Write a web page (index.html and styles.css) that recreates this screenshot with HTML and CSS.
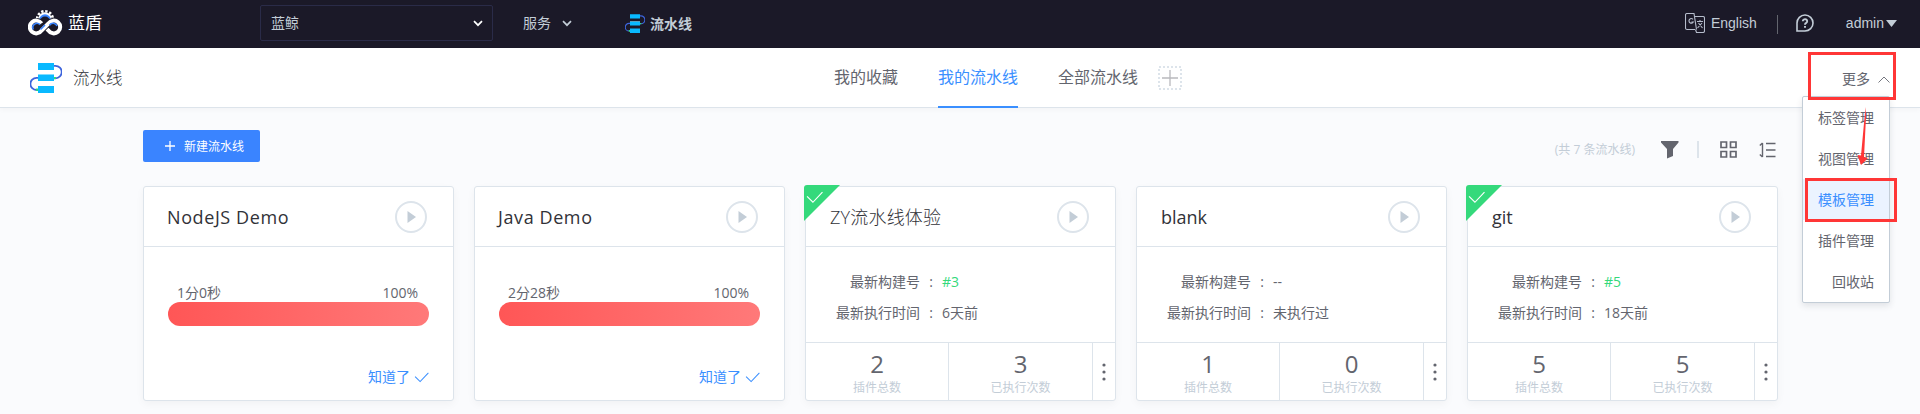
FILE: index.html
```html
<!DOCTYPE html>
<html lang="zh-CN">
<head>
<meta charset="utf-8">
<title>流水线</title>
<link rel="stylesheet" href="styles.css">
</head>
<body>
<svg width="0" height="0" class="defs">
  <symbol id="pipe" viewBox="0 0 32 30">
    <path d="M24 2.800h1.500a5.500 5.500 0 0 1 0 12.500H24M8 14.800H6.500a5.500 5.500 0 0 0 0 12.200H8" fill="none" stroke="#3d64dc" stroke-width="1.800"/>
    <path d="M8 0h16v7H8zM8 12h16v6H8zM8 23h16v7H8z" fill="#09b9ff"/>
    <path d="M8 11h16v1H8z" fill="#7fdcff"/>
    <path d="M24 14h2v2h-2zM6 25.500h2v2.500H6z" fill="#30d878"/>
  </symbol>
  <symbol id="down" viewBox="0 0 10 7"><path d="M1 1.200l4 4 4-4" fill="none" stroke="currentColor" stroke-width="1.700"/></symbol>
  <symbol id="check" viewBox="0 0 16 12"><path d="M1 5l5.500 5.500L15.500 1" fill="none" stroke="currentColor" stroke-width="1.100"/></symbol>
  <symbol id="play" viewBox="0 0 32 32"><circle cx="16" cy="16" r="15" fill="#fff" stroke="#dde4eb" stroke-width="2"/><path d="M12.500 10v12l8.500-6z" fill="#c3cdd7"/></symbol>
  <symbol id="more" viewBox="0 0 4 18"><circle cx="2" cy="2" r="1.600"/><circle cx="2" cy="9" r="1.600"/><circle cx="2" cy="16" r="1.600"/></symbol>
</svg>
<header class="topbar">
  <div class="brand">
    <svg width="35" height="29" viewBox="0 0 35 29">
      <circle cx="17" cy="11" r="7.800" fill="none" stroke="#fff" stroke-width="2.600" stroke-dasharray="2.400 1.680"/>
      <circle cx="17" cy="11" r="6.800" fill="#fff"/>
      <circle cx="17" cy="12" r="5.800" fill="#3a84ff"/>
      <circle cx="17" cy="13.500" r="5" fill="#1b1928"/>
      <circle cx="9" cy="19" r="9" fill="#1b1928"/><circle cx="25" cy="19" r="9" fill="#1b1928"/>
      <path d="M17 19l-3.500 3.600a6.400 6.400 0 1 1 0-7.200M17 19l3.500-3.600a6.400 6.400 0 1 1 0 7.200l-1.500-1.500" fill="none" stroke="#fff" stroke-width="4"/>
      <path d="M5.300 21.500a4.200 4.200 0 0 1 6.700-4.900M21.500 17.200a4.200 4.200 0 0 1 7.500.8M12.500 21.500L17 17" fill="none" stroke="#3a84ff" stroke-width="1.600"/>
    </svg>
    <span>蓝盾</span>
  </div>
  <div class="project"><span>蓝鲸</span><svg width="10" height="7"><use href="#down"/></svg></div>
  <div class="service"><span>服务</span><svg width="10" height="7"><use href="#down"/></svg></div>
  <div class="current"><svg width="20" height="19"><use href="#pipe"/></svg><b>流水线</b></div>
  <div class="user">
    <svg width="20" height="20" viewBox="0 0 20 20" fill="none" stroke="#b5bccb" stroke-width="1.100"><path d="M10 16.500H2A1.500 1.500 0 0 1 .5 15V2A1.500 1.500 0 0 1 2 .5h7l2.500 16M10 3.500h8A1.500 1.500 0 0 1 19.500 5v13a1.500 1.500 0 0 1-1.500 1.500h-6.500l-1-3M8 6.300A2.300 2.300 0 1 0 8.300 9H6.500M12 8.500h6M15 7v1.500M13.500 10l4 5M17 10l-4.500 5"/></svg>
    <span class="lang">English</span>
    <i class="bar"></i>
    <svg class="help" width="18" height="18" viewBox="0 0 18 18" fill="none" stroke="#c3cdd7"><path d="M1 17V9a8 8 0 1 1 8 8z" stroke-width="1.600"/><path d="M6.800 7.300a2.200 2 0 1 1 3.400 1.600Q9 9.500 9 10.800M9 12v1.800" stroke-width="1.900"/></svg>
    <span class="name">admin</span>
    <svg width="11" height="7"><path d="M0 0h11L5.500 7z" fill="#c3cdd7"/></svg>
  </div>
</header>
<nav class="nav">
  <div class="title"><svg width="32" height="30"><use href="#pipe"/></svg><span>流水线</span></div>
  <div class="tabs">
    <span class="tab">我的收藏</span><span class="tab active">我的流水线</span><span class="tab">全部流水线</span>
    <svg class="add" width="24" height="24"><rect x="1" y="1" width="22" height="22" fill="none" stroke="#dde4eb" stroke-width="2" stroke-dasharray="2 2"/><path d="M4 12h16M12 4v16" stroke="#b9b9bd" stroke-width="1.300"/></svg>
  </div>
  <div class="trigger">更多<svg width="12" height="7" viewBox="0 0 12 7"><path d="M.5 6.500L6 1l5.500 5.500" fill="none" stroke="#75777f"/></svg>
    <ul class="menu"><li>标签管理</li><li>视图管理</li><li class="on">模板管理</li><li>插件管理</li><li>回收站</li></ul>
    <svg class="marks" width="96" height="174" fill="none"><rect x="5.500" y="1.500" width="85" height="45" stroke="#ff3636" stroke-width="3"/><rect x="2.500" y="127.500" width="89" height="41" stroke="#ff3636" stroke-width="3"/><path d="M61.500 55l.5 10-2 40 4 1-7 7-3.500-10 3.500.5z" fill="#ff3636"/></svg>
  </div>
</nav>
<main class="main">
  <div class="tools">
    <button class="create"><svg width="10" height="10"><path d="M0 5h10M5 0v10" stroke="#fff" stroke-width="1.300"/></svg>新建流水线</button>
    <span class="count">(共 7 条流水线)</span>
    <svg class="filter" width="18" height="18"><path d="M0 0h17.500v1.500L12 8v7l-6 2.500V8L0 1.500z" fill="#63656e"/></svg>
    <i class="split"></i>
    <svg class="grid" width="17" height="17" fill="none" stroke="#63656e" stroke-width="1.700"><path d="M1 1h5.500v5.500H1zM10.500 1H16v5.500h-5.500zM1 10.500h5.500V16H1zM10.500 10.500H16V16h-5.500z"/></svg>
    <svg width="17" height="16" fill="none" stroke="#63656e" stroke-width="1.400"><path d="M3.500 1v14M.8 3.500L3.500 1M.8 12.500L3.500 15M7 1.500h9.500M7 8h9.500M7 14.500h9.500"/></svg>
  </div>
  <div class="cards">
    <section class="card">
      <header class="head"><h3 class="spaced">NodeJS Demo</h3><svg width="32" height="32"><use href="#play"/></svg></header>
      <div class="progress"><div class="info"><span>1分0秒</span><span>100%</span></div><div class="meter"></div><a class="ack">知道了<svg width="15" height="11"><use href="#check"/></svg></a></div>
    </section>
    <section class="card">
      <header class="head"><h3 class="spaced">Java Demo</h3><svg width="32" height="32"><use href="#play"/></svg></header>
      <div class="progress"><div class="info"><span>2分28秒</span><span>100%</span></div><div class="meter"></div><a class="ack">知道了<svg width="15" height="11"><use href="#check"/></svg></a></div>
    </section>
    <section class="card">
      <div class="ribbon"><svg width="17" height="13"><use href="#check"/></svg></div>
      <header class="head"><h3 class="light">ZY流水线体验</h3><svg width="32" height="32"><use href="#play"/></svg></header>
      <dl class="detail"><dt>最新构建号</dt><dd class="ok">#3</dd><dt>最新执行时间</dt><dd>6天前</dd></dl>
      <footer class="stats"><div><b>2</b><span>插件总数</span></div><div><b>3</b><span>已执行次数</span></div><svg width="22" height="18" fill="#63656e"><use href="#more"/></svg></footer>
    </section>
    <section class="card">
      <header class="head"><h3>blank</h3><svg width="32" height="32"><use href="#play"/></svg></header>
      <dl class="detail"><dt>最新构建号</dt><dd>--</dd><dt>最新执行时间</dt><dd>未执行过</dd></dl>
      <footer class="stats"><div><b>1</b><span>插件总数</span></div><div><b>0</b><span>已执行次数</span></div><svg width="22" height="18" fill="#63656e"><use href="#more"/></svg></footer>
    </section>
    <section class="card">
      <div class="ribbon"><svg width="17" height="13"><use href="#check"/></svg></div>
      <header class="head"><h3>git</h3><svg width="32" height="32"><use href="#play"/></svg></header>
      <dl class="detail"><dt>最新构建号</dt><dd class="ok">#5</dd><dt>最新执行时间</dt><dd>18天前</dd></dl>
      <footer class="stats"><div><b>5</b><span>插件总数</span></div><div><b>5</b><span>已执行次数</span></div><svg width="22" height="18" fill="#63656e"><use href="#more"/></svg></footer>
    </section>
  </div>
</main>
</body>
</html>
```

FILE: styles.css
```css
* { box-sizing: border-box; }
body {
  margin: 0;
  height: 414px;
  overflow: hidden;
  background: #fafbfd;
  color: #63656e;
  font: 14px/20px "Open Sans", "Noto Sans CJK SC", sans-serif;
  font-weight: 400;
  display: flex;
  flex-direction: column;
}
svg { display: block; flex: none; }
.defs { position: absolute; }
h3, dl, dd, ul { margin: 0; padding: 0; }

.topbar { height: 48px; flex: none; background: #1b1928; display: flex; align-items: center; color: #c3cdd7; font-weight: 400; }
.brand { width: 260px; padding: 0 0 3px 28px; display: flex; align-items: center; gap: 5px; color: #fff; font-size: 17px; }
.project { width: 233px; height: 36px; margin-top: -2px; border: 1px solid #2a2b48; border-radius: 2px; padding: 0 9px 0 10px; display: flex; align-items: center; justify-content: space-between; }
.project svg { color: #fff; }
.service { margin-left: 30px; display: flex; align-items: center; gap: 11px; margin-top: -2px; }
.current { margin-left: 53px; display: flex; align-items: center; gap: 5px; margin-top: -1px; }
.current b { font-weight: 700; }
.user { margin-left: auto; padding-right: 23px; display: flex; align-items: center; font: 14px/20px "Liberation Sans", Arial, sans-serif; margin-top: -2px; }
.lang { margin-left: 6px; }
.bar { width: 1px; height: 19px; background: #63656e; margin: 2px 18px 0 20px; }
.name { margin-left: 32px; }
.user .name + svg { margin-left: 2px; }

.nav { height: 60px; flex: none; background: #fff; border-bottom: 1px solid #dde4eb; box-shadow: 0 2px 5px rgba(0, 0, 0, .03); display: grid; grid-template-columns: 834px 1fr 240px; position: relative; z-index: 1; }
.title { display: flex; align-items: center; padding-left: 30px; gap: 11px; font-size: 16.500px; color: #313238; font-weight: 300; }
.tabs { display: flex; align-items: center; font-size: 16px; gap: 40px; height: 60px; }
.tab { height: 60px; line-height: 59px; }
.tab.active { color: #3a8fff; border-bottom: 2px solid #3a8fff; }
.add { margin-left: -20px; }
.trigger { position: relative; display: flex; align-items: center; justify-content: flex-end; gap: 8px; padding: 2px 30px 0 0; }
.menu { position: absolute; left: 122px; top: 48px; width: 88px; height: 207px; border: 1px solid #c3cdd7; border-radius: 2px; background: #fff; list-style: none; box-shadow: 0 3px 6px rgba(51, 60, 72, .12); text-align: right; }
.menu li { height: 41px; line-height: 41px; padding-right: 15px; }
.menu .on { background: #ebf3ff; color: #3a8fff; }
.marks { position: absolute; left: 124px; top: 4px; }

.main { padding: 22px 142px 0 143px; }
.tools { display: flex; align-items: center; height: 32px; }
.create { width: 117px; height: 32px; border: 0; border-radius: 2px; background: #3a84ff; color: #fff; font: 12px/32px "Noto Sans CJK SC", sans-serif; display: flex; align-items: center; gap: 9px; padding: 0 0 0 22px; }
.count { margin-left: auto; padding-top: 7px; font-size: 12px; color: #c3cdd7; }
.filter { margin: 7px 18px 0 26px; }
.split { width: 2px; height: 17px; background: #dde4eb; margin: 7px 21px 0 0; }
.grid { margin: 7px 22px 0 0; }
.grid + svg { margin-top: 7px; margin-right: 2px; }

.cards { display: grid; grid-template-columns: repeat(5, 311px); gap: 20px; margin-top: 24px; }
.card { position: relative; height: 215px; background: #fff; border: 1px solid #dde4eb; border-radius: 3px; box-shadow: 0 3px 8px rgba(0, 0, 0, .04); display: flex; flex-direction: column; }
.head { height: 60px; flex: none; border-bottom: 1px solid #dde4eb; display: flex; align-items: center; justify-content: space-between; padding: 0 26px 0 24px; }
h3 { font-size: 18px; font-weight: 400; color: #313238; line-height: 24px; }
h3.spaced { letter-spacing: .6px; margin-left: -1px; }
h3.light { font-weight: 300; letter-spacing: .2px; }
.progress { flex: 1; padding: 36px 24px 0; display: flex; flex-direction: column; }
.info { display: flex; justify-content: space-between; padding: 0 11px 0 9px; height: 19px; }
.meter { height: 24px; border-radius: 12px; background: linear-gradient(90deg, #ff5656, #ff7979); }
.ack { display: flex; align-items: center; justify-content: flex-end; gap: 4px; color: #3a8fff; margin-top: 41px; }
.detail { height: 95px; flex: none; display: grid; grid-template-columns: 114px 1fr; grid-auto-rows: 31px; column-gap: 22px; padding-top: 19px; line-height: 31px; }
dt { text-align: right; position: relative; }
dt::after { content: ":"; position: absolute; right: -13px; }
.ok { color: #34d97b; }
.stats { flex: 1; border-top: 1px solid #dde4eb; display: grid; grid-template-columns: 143px 144px 1fr; align-items: center; }
.stats div { height: 57px; border-right: 1px solid #dde4eb; display: flex; flex-direction: column; align-items: center; }
.stats b { font-size: 24px; line-height: 26px; font-weight: 400; margin-top: 8px; }
.stats span { font-size: 12px; line-height: 18px; color: #c3cdd7; margin-top: 2px; }
.ribbon { position: absolute; left: -2px; top: -2px; width: 36px; height: 36px; background: #34d97b; clip-path: polygon(0 0, 100% 0, 0 100%); color: #fff; padding: 6px 0 0 2px; border-radius: 3px 0 0; }
```
